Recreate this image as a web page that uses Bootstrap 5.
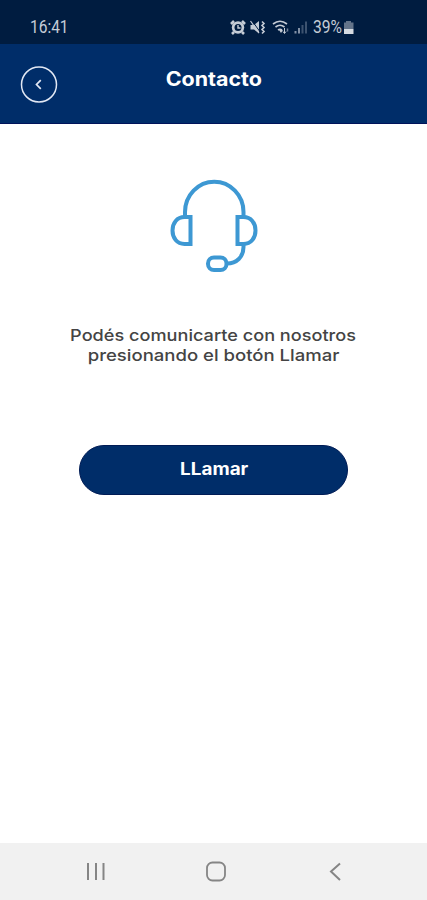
<!DOCTYPE html>
<html lang="es">
<head>
<meta charset="utf-8">
<meta name="viewport" content="width=device-width, initial-scale=1">
<title>Contacto</title>
<link href="https://cdn.jsdelivr.net/npm/bootstrap@5.3.0/dist/css/bootstrap.min.css" rel="stylesheet">
<style>
  body { font-family: Inter, "Open Sans", sans-serif; background: #fff; }
  svg { display: block; flex: none; overflow: visible; }
  .screen { height: 900px; }
  .status-bar { height: 44px; background: #001c40; padding: 10px 71px 0 30px; }
  .status-bar text { font-family: Roboto, sans-serif; font-size: 18px; fill: #c5ccd6; }
  .clock { font-family: Roboto, sans-serif; font-size: 18px; line-height: 34px; color: #c5ccd6; transform: scaleX(.86); transform-origin: left; }
  .app-header { height: 80px; background: #002d69; border-bottom: 1px solid #00135a; padding: 21px 20px 0; }
  .side { width: 38px; }
  .back-btn { line-height: 0; }
  .app-title { font-size: 19.5px; line-height: 28px; font-weight: 700; color: #fff; transform: scaleX(1.1); }
  .headset { margin-top: 51px; }
  .message { margin-top: 50px; font-size: 16.5px; line-height: 20px; font-weight: 500; color: #444; }
  .message span { display: block; white-space: nowrap; }
  .line-a { transform: scaleX(1.099); }
  .line-b { transform: translateX(.5px) scaleX(1.123); }
  .call-btn { width: 269px; height: 50px; margin-top: 80px; background: #002d69; border: 1px solid #001b55; color: #fff; font-size: 17px; font-weight: 700; }
  .call-btn span { display: inline-block; transform: translateX(.5px) scaleX(1.11); }
  .nav-keys { height: 57px; background: #f1f1f1; padding: 0 81px 0 85px; }
</style>
</head>
<body>
<div class="screen d-flex flex-column">
  <div class="status-bar d-flex justify-content-between align-items-start">
    <span class="clock">16:41</span>
    <svg width="126" height="30" viewBox="230 10 126 30" fill="none" stroke="#c5ccd6" stroke-width="1.6">
      <path d="M231 24l3-3M245 24l-3-3M234 32l-2 2M242 32l2 2" stroke-width="2.6"/>
      <circle cx="238" cy="27.5" r="6.2" fill="#c5ccd6" stroke="none"/>
      <circle cx="238" cy="27.5" r="3.5" fill="#001c40" stroke="none"/>
      <path d="M238 25v3h2.5" stroke-width="1.4"/>
      <path d="M250.500 25h3.500l5-4v12.500l-5-4h-3.500z" fill="#c5ccd6" stroke="none"/>
      <path d="M251.500 20l9 12.500" stroke="#001c40" stroke-width="1"/>
      <path d="M250.500 21l8.500 12" stroke-width="1.200"/>
      <path d="M262 21.500l2 2-2 2 2 2-2 2 2 2-2 2"/>
      <path d="M273 24q7-5.500 14 0M275.500 27q4.500-3.500 9 0M278 30q2-1.500 4 0"/>
      <path d="M279 30h4l-2 3z" fill="#c5ccd6" stroke="none"/>
      <path d="M284.500 28v5M283 31.500l1.500 2 1.500-2" stroke-width="1"/>
      <path d="M287.500 28.500v3" stroke-width="1.500" stroke="#718198"/>
      <path d="M295.500 31v2.500M299 28v5.500" stroke="#8290a5" stroke-width="2"/>
      <path d="M302.500 25v8.500M306 21.500v12" stroke="#3d5370" stroke-width="2"/>
      <text x="313" y="33" stroke="none" textLength="29" lengthAdjust="spacingAndGlyphs">39%</text>
      <path d="M344 22.500h2v-1.500h5v1.500h2.500v6.500h-9.500z" fill="#64748a" stroke="none"/>
      <rect x="344" y="29" width="9.500" height="5" fill="#d5dae1" stroke="none"/>
    </svg>
  </div>

  <header class="app-header d-flex justify-content-between align-items-start">
    <button class="btn p-0 border-0 side back-btn" aria-label="Volver">
      <svg width="38" height="38" viewBox="0 0 38 38" fill="none" stroke="#e2e8f4">
        <circle cx="19" cy="19.500" r="17.500" stroke-width="1.500"/>
        <path d="M20.800 15.200l-4.300 4.300 4.300 4.300" stroke-width="1.700"/>
      </svg>
    </button>
    <h1 class="app-title m-0">Contacto</h1>
    <div class="side"></div>
  </header>

  <main class="flex-grow-1 d-flex flex-column align-items-center">
    <svg class="headset" width="100" height="100" viewBox="164 175 100 100" fill="none" stroke="#3d98d3" stroke-width="4">
      <path d="M185 217v-5a29 30 0 0 1 58.500 0v5"/>
      <path d="M190.500 217v27h-6c-7.500 0-12-6-12-13.500s4.500-13.500 12-13.500z"/>
      <path d="M237.500 217v27h6c7.500 0 12-6 12-13.500s-4.500-13.500-12-13.500z"/>
      <path d="M243.500 245v2c0 10-7 16.500-16.500 16.500"/>
      <rect x="208" y="257.500" width="18.500" height="12.500" rx="6"/>
    </svg>
    <p class="message mb-0 text-center"><span class="line-a">Podés comunicarte con nosotros</span><span class="line-b">presionando el botón Llamar</span></p>
    <button class="btn rounded-pill call-btn p-0"><span>LLamar</span></button>
  </main>

  <nav class="nav-keys d-flex justify-content-between align-items-center">
    <svg width="22" height="22" viewBox="0 0 22 22" stroke="#858585" stroke-width="2"><path d="M3 2v17M11 2v17M18.500 2v17"/></svg>
    <svg width="22" height="22" viewBox="0 0 22 22" fill="none" stroke="#858585" stroke-width="1.800"><rect x="2" y="1.500" width="18" height="18" rx="5.500"/></svg>
    <svg width="22" height="22" viewBox="0 0 22 22" fill="none" stroke="#858585" stroke-width="2"><path d="M16 2.500L7 10.500l9 8.500"/></svg>
  </nav>
</div>
<script src="https://cdn.jsdelivr.net/npm/bootstrap@5.3.0/dist/js/bootstrap.bundle.min.js"></script>
</body>
</html>
